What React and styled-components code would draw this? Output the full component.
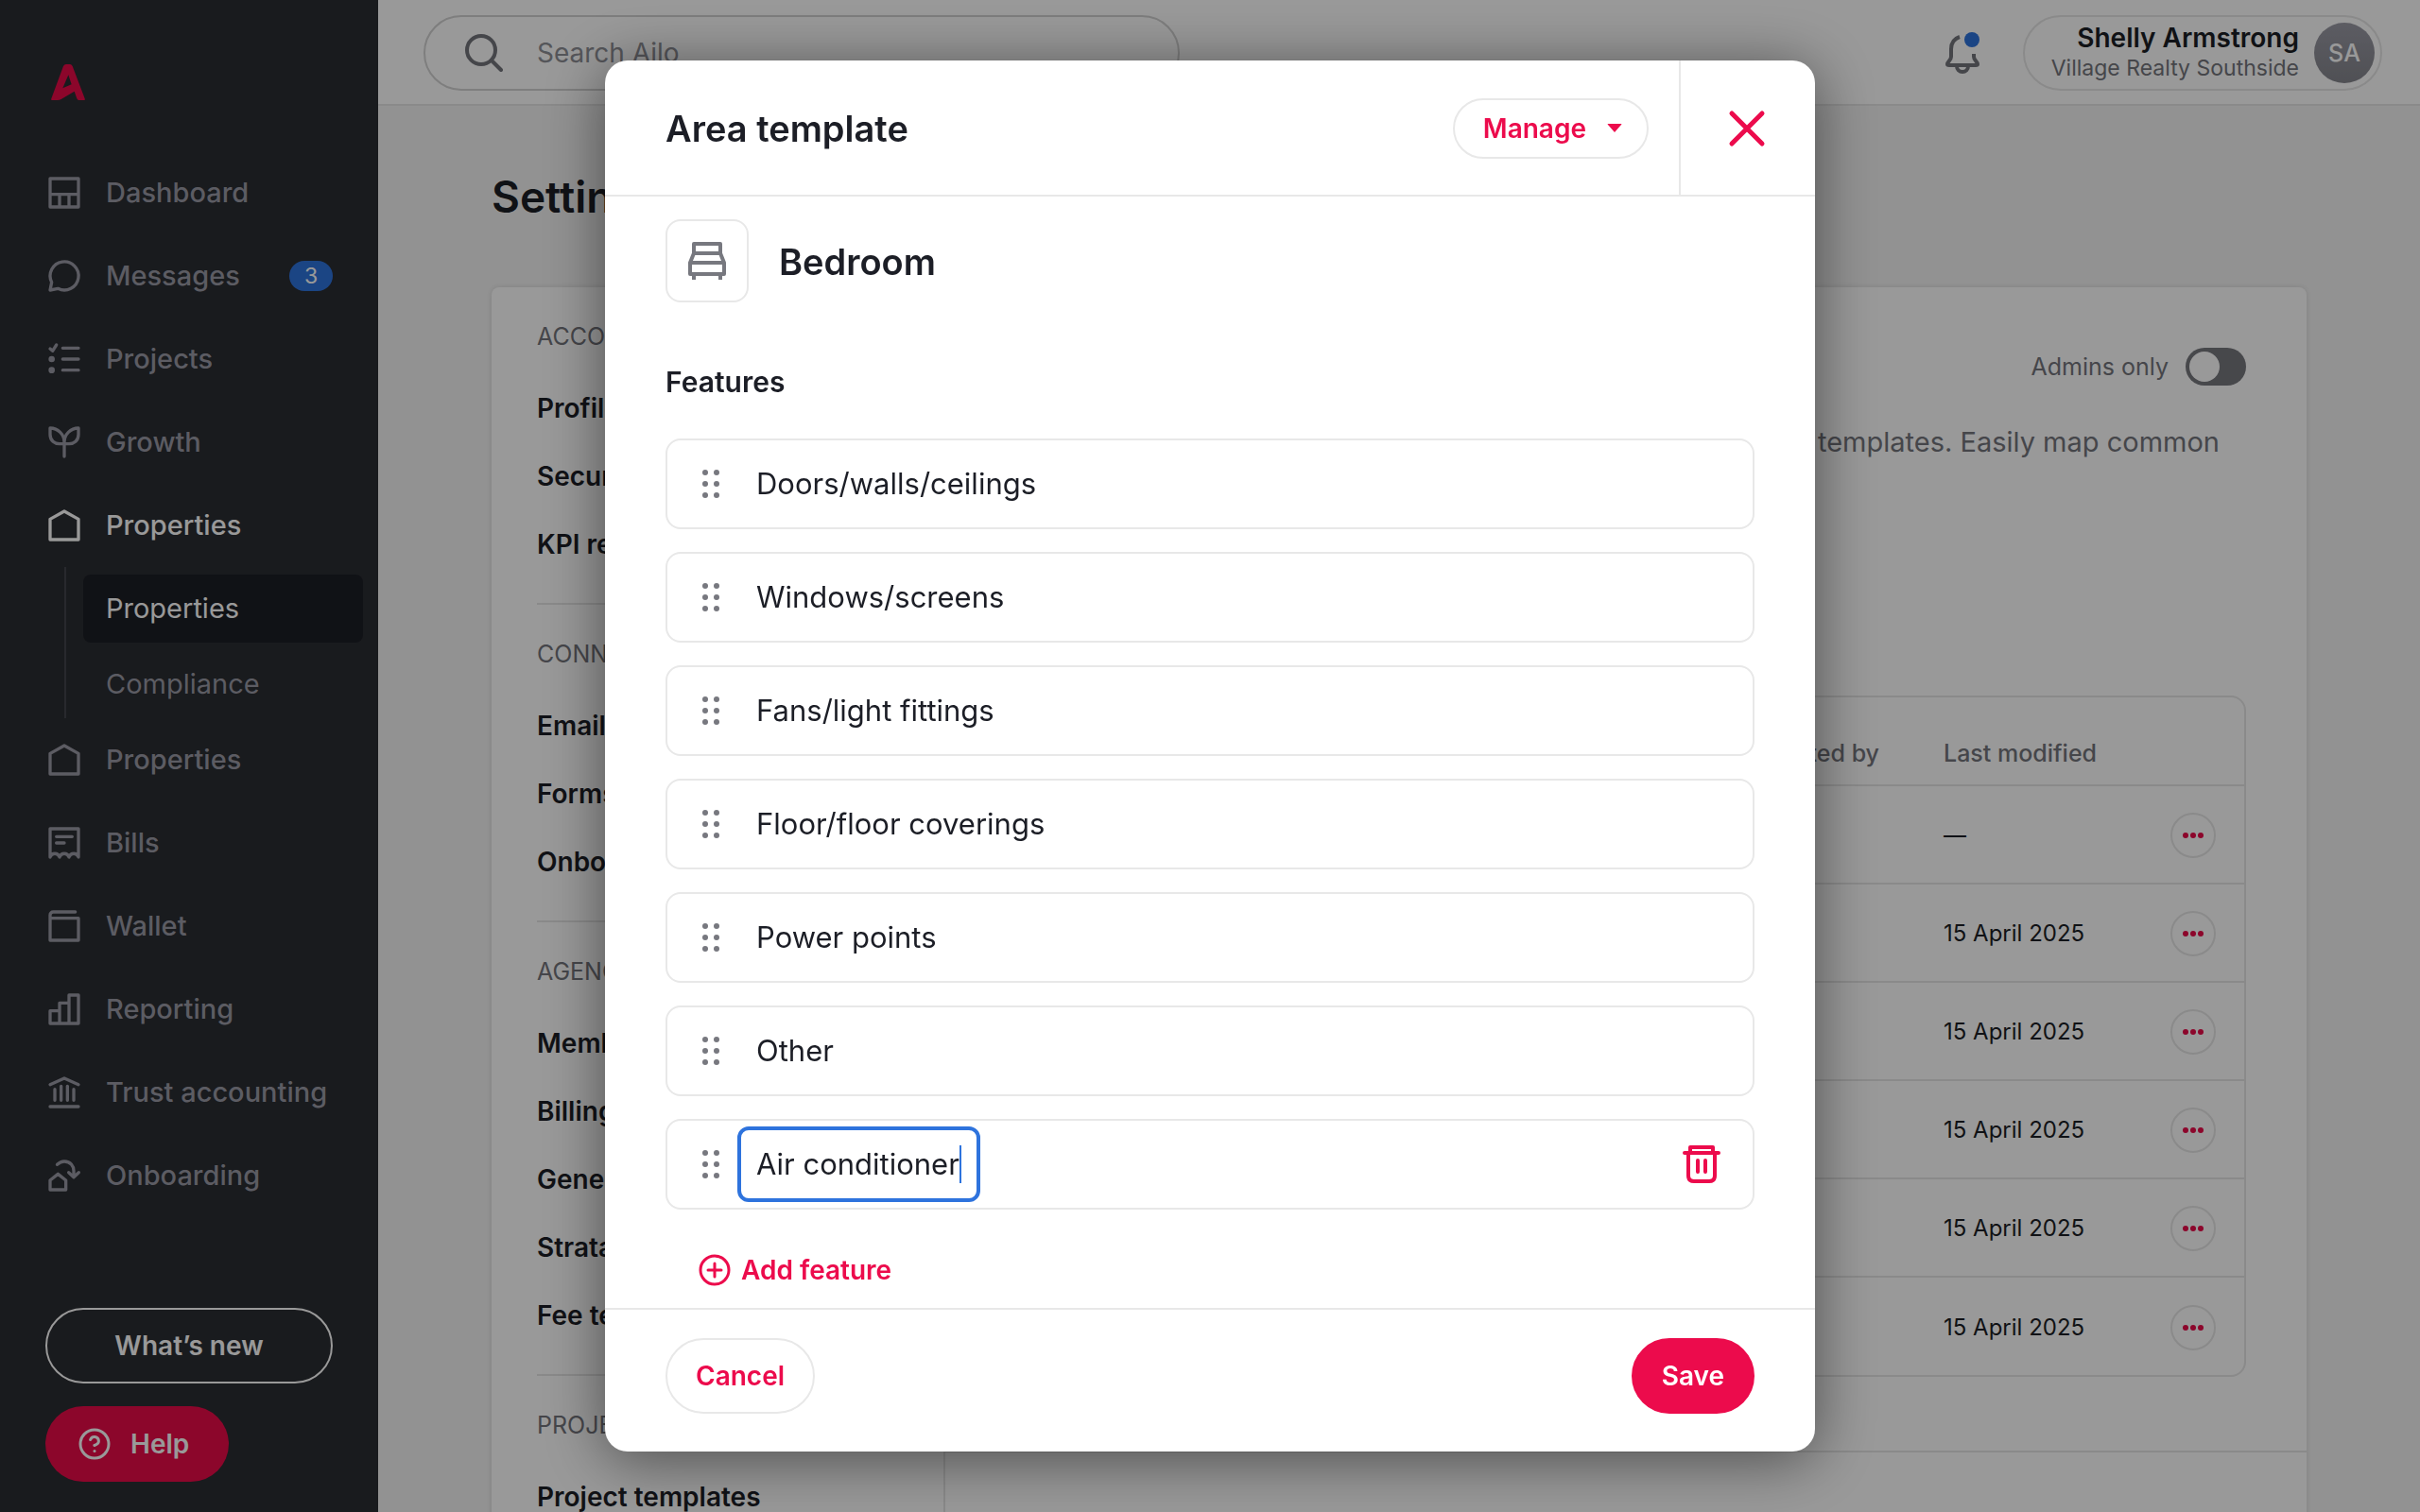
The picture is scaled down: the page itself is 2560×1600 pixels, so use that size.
import { useState } from 'react';
import styled, { createGlobalStyle } from 'styled-components';
import { CircleHelp } from 'lucide-react';

const GlobalStyle = createGlobalStyle`
  * {
    box-sizing: border-box;
  }

  body {
    margin: 0;
    background: #f4f4f4;
    color: #1c1e26;
    font-family: Inter, 'Liberation Sans', sans-serif;
    font-size: 29px;
    line-height: 40px;
  }

  button, input {
    font: inherit;
    color: inherit;
  }

  button {
    background: none;
    border: none;
    padding: 0;
    cursor: pointer;
  }

  a {
    color: inherit;
    text-decoration: none;
  }

  svg {
    display: block;
    flex-shrink: 0;
  }
`;

/* ---------- App shell ---------- */

const Page = styled.div`
  display: flex;
  height: 100vh;
  overflow: hidden;
`;

const Main = styled.div`
  flex: 1;
  min-width: 0;
`;

const Sidebar = styled.aside`
  width: 400px;
  flex-shrink: 0;
  display: flex;
  flex-direction: column;
  padding: 68px 0 32px;
  background: #2b2d32;
  color: #999aa5;
  font-weight: 500;
`;

const Logo = styled.a`
  margin: 0 54px 54px;
  color: #e90a49;
`;

const NavLink = styled.a`
  display: flex;
  align-items: center;
  height: 88px;
  padding: 0 48px;
  gap: 24px;
  color: ${({ $active }) => ($active ? '#fff' : 'inherit')};
`;

const NavBadge = styled.span`
  margin-left: auto;
  width: 46px;
  border-radius: 16px;
  background: #2e73dd;
  color: #fff;
  font-size: 23px;
  font-weight: 400;
  line-height: 32px;
  text-align: center;
`;

const SubNav = styled.div`
  display: flex;
  flex-direction: column;
  gap: 8px;
  margin-left: 68px;
  padding: 8px 16px 0 18px;
  border-left: 2px solid #43454d;
`;

const SubNavLink = styled.a`
  padding: 16px 24px;
  border-radius: 8px;
  background: ${({ $active }) => ($active ? '#1c1e26' : 'transparent')};
  color: ${({ $active }) => ($active ? '#fff' : 'inherit')};
  font-weight: 400;
`;

const SidebarActions = styled.div`
  display: flex;
  flex-direction: column;
  align-items: flex-start;
  gap: 24px;
  margin-top: auto;
  padding: 0 48px;
`;

const WhatsNewButton = styled.button`
  width: 100%;
  height: 80px;
  border: 2px solid #fff;
  border-radius: 40px;
  color: #fff;
  font-size: 28px;
  font-weight: 600;
`;

const HelpButton = styled.button`
  display: flex;
  align-items: center;
  gap: 20px;
  height: 80px;
  padding: 0 42px 0 34px;
  border-radius: 40px;
  background: #e90a49;
  color: #fff;
  font-size: 28px;
  font-weight: 600;
`;

/* ---------- Top bar ---------- */

const TopBar = styled.header`
  display: flex;
  align-items: center;
  height: 112px;
  padding: 2px 40px 0 48px;
  background: #fff;
  border-bottom: 2px solid #e6e6e6;
`;

const SearchBox = styled.label`
  display: flex;
  align-items: center;
  gap: 36px;
  width: 800px;
  height: 80px;
  padding: 0 42px;
  border: 2px solid #d2d2d2;
  border-radius: 40px;
  color: #74757c;
`;

const SearchInput = styled.input`
  flex: 1;
  border: none;
  outline: none;
  padding: 0;
  background: none;
  font-size: 28px;

  &::placeholder {
    color: #8e8f96;
    opacity: 1;
  }
`;

const BellButton = styled.button`
  margin-left: auto;
  margin-right: 40px;
`;

const UserButton = styled.button`
  display: flex;
  align-items: center;
  gap: 16px;
  height: 80px;
  padding: 0 6px 0 28px;
  border: 2px solid #e6e6e6;
  border-radius: 40px;
  text-align: right;
`;

const UserName = styled.span`
  display: block;
  font-size: 28px;
  font-weight: 600;
  line-height: 32px;
`;

const UserOrg = styled.span`
  display: block;
  color: #74757c;
  font-size: 23px;
  line-height: 32px;
`;

const Avatar = styled.span`
  width: 64px;
  border-radius: 50%;
  background: linear-gradient(#9a9aa5, #85868d);
  color: #fff;
  font-size: 25px;
  font-weight: 500;
  line-height: 64px;
  text-align: center;
`;

/* ---------- Settings ---------- */

const Content = styled.main`
  padding: 64px 120px 0;
`;

const PageTitle = styled.h1`
  margin: 0 0 64px;
  font-size: 46px;
  font-weight: 600;
  line-height: 64px;
`;

const Card = styled.div`
  display: flex;
  background: #fff;
  border-radius: 8px;
  box-shadow: 0 0 6px rgba(0, 0, 0, 0.12);
`;

const SettingsMenu = styled.nav`
  width: 480px;
  flex-shrink: 0;
  padding: 0 46px 0 48px;
  border-right: 2px solid #e6e6e6;
`;

const MenuGroup = styled.section`
  padding-bottom: 26px;
  border-bottom: 2px solid #e6e6e6;
`;

const MenuHeading = styled.h2`
  margin: 0;
  padding: 32px 0 20px;
  color: #74757c;
  font-size: 25px;
  font-weight: 400;
  text-transform: uppercase;
`;

const MenuLink = styled.a`
  display: block;
  padding: 16px 0;
  font-size: 28px;
  font-weight: 600;
  white-space: nowrap;
`;

const TemplatesPanel = styled.section`
  flex: 1;
  align-self: flex-start;
  padding: 64px 64px 78px;
  border-bottom: 2px solid #e6e6e6;
`;

const AdminToggle = styled.label`
  display: flex;
  align-items: center;
  justify-content: flex-end;
  gap: 18px;
  color: #74757c;
  font-size: 25px;
`;

const Switch = styled.input`
  appearance: none;
  width: 64px;
  height: 40px;
  margin: 0;
  padding: 4px;
  border-radius: 20px;
  background: #77787e;

  &::before {
    content: '';
    display: block;
    width: 32px;
    height: 32px;
    border-radius: 50%;
    background: #fff;
  }

  &:checked::before {
    margin-left: auto;
  }
`;

const PanelText = styled.p`
  margin: 40px 0 248px;
  padding-right: 28px;
  color: #74757c;
  text-align: right;
`;

const TableFrame = styled.div`
  border: 2px solid #e6e6e6;
  border-radius: 16px;
`;

const Table = styled.table`
  width: 100%;
  border-collapse: collapse;
  font-size: 24px;
  text-align: left;

  th {
    height: 93px;
    padding: 26px 0 0;
    color: #74757c;
    font-size: 25px;
    font-weight: 500;
    line-height: 36px;
  }

  td {
    height: 104px;
    padding: 2px 0 0;
    border-top: 2px solid #e6e6e6;
  }

  th:first-child {
    padding-right: 68px;
    text-align: right;
  }

  th:nth-child(2) {
    width: 240px;
  }

  th:last-child {
    width: 78px;
  }
`;

const MoreButton = styled.button`
  display: flex;
  align-items: center;
  justify-content: center;
  width: 48px;
  height: 48px;
  border: 2px solid #e6e6e6;
  border-radius: 50%;
  color: #e90a49;
`;

/* ---------- Modal ---------- */

const Overlay = styled.div`
  position: fixed;
  inset: 0;
  display: flex;
  justify-content: center;
  padding: 64px;
  background: rgba(0, 0, 0, 0.4);
`;

const Modal = styled.div`
  display: flex;
  flex-direction: column;
  width: 100%;
  max-width: 1280px;
  border-radius: 24px;
  background: #fff;
  box-shadow: 0 8px 64px rgba(0, 0, 0, 0.5);
`;

const ModalHeader = styled.header`
  display: flex;
  align-items: center;
  height: 144px;
  padding-left: 64px;
  border-bottom: 2px solid #e8e8e8;
`;

const ModalTitle = styled.h2`
  flex: 1;
  margin: 0;
  padding-top: 2px;
  font-size: 38px;
  font-weight: 600;
  line-height: 48px;
`;

const Button = styled.button`
  display: flex;
  align-items: center;
  justify-content: center;
  height: 80px;
  padding: 0 30px;
  border: 2px solid ${({ $primary }) => ($primary ? '#ec0b4c' : '#e8e8e8')};
  border-radius: 40px;
  background: ${({ $primary }) => ($primary ? '#ec0b4c' : '#fff')};
  color: ${({ $primary }) => ($primary ? '#fff' : '#ec0b4c')};
  font-size: 28px;
  font-weight: 600;
`;

const ManageButton = styled(Button)`
  height: 64px;
  margin: 2px 32px 0 0;
  padding-right: 26px;
  gap: 22px;
`;

const CloseButton = styled.button`
  display: flex;
  align-items: center;
  justify-content: center;
  align-self: stretch;
  width: 144px;
  padding: 2px 2px 0 0;
  border-left: 2px solid #e8e8e8;
  color: #ec0b4c;
`;

const ModalBody = styled.div`
  flex: 1;
  min-height: 0;
  overflow: hidden;
  padding: 24px 64px 0;
`;

const AreaHeading = styled.div`
  display: flex;
  align-items: center;
  gap: 32px;
`;

const AreaIcon = styled.button`
  display: flex;
  align-items: center;
  justify-content: center;
  width: 88px;
  height: 88px;
  border: 2px solid #e8e8e8;
  border-radius: 16px;
  color: #77787f;
`;

const SectionTitle = styled.h3`
  margin: 64px 0 40px;
  font-size: 30px;
  font-weight: 600;
  line-height: 40px;
`;

const FeatureList = styled.ul`
  display: flex;
  flex-direction: column;
  gap: 24px;
  margin: 0;
  padding: 0;
  list-style: none;
`;

const Feature = styled.li`
  display: flex;
  align-items: center;
  gap: 16px;
  height: 96px;
  padding: 0 34px;
  border: 2px solid #e8e8e8;
  border-radius: 16px;
  font-size: 31px;
`;

const FeatureField = styled.label`
  display: flex;
  align-items: center;
  height: 80px;
  padding: 0 16px;
  border: 4px solid ${({ $editing }) => ($editing ? '#2e73dd' : 'transparent')};
  border-radius: 12px;
`;

const FeatureInput = styled.input`
  field-sizing: content;
  height: 40px;
  padding: 0;
  border: none;
  outline: none;
  background: none;
  caret-color: transparent;
`;

const Caret = styled.span`
  width: 2px;
  height: 40px;
  background: #2e73dd;
`;

const DeleteButton = styled.button`
  margin-left: auto;
  color: #ec0b4c;
`;

const AddButton = styled.button`
  display: flex;
  align-items: center;
  gap: 8px;
  margin: 44px 32px 0;
  color: #ec0b4c;
  font-size: 28px;
  font-weight: 600;
`;

const ModalFooter = styled.footer`
  display: flex;
  justify-content: space-between;
  padding: 30px 64px 40px;
  border-top: 2px solid #e8e8e8;
`;

/* ---------- Icons ---------- */

function Icon({ children, size = 40, box = 24, width = 2 }) {
  return (
    <svg
      width={size}
      height={size}
      viewBox={`0 0 ${box} ${box}`}
      fill="none"
      stroke="currentColor"
      strokeWidth={width}
      strokeLinecap="round"
      strokeLinejoin="round"
      aria-hidden="true"
    >
      {children}
    </svg>
  );
}

const houseIcon = <path d="M12 3l9 5v13H3V8z" />;

const navIcons = {
  dashboard: <path d="M3 3h18v18H3zM3 13h18M9 13v8M15 13v8" />,
  messages: <path d="M3 21l1-5A9 9 0 1 1 8 20z" />,
  projects: (
    <>
      <path d="M3 5.4l1.6 1.4L7 3M11 5h10M11 12h10M11 19h10" />
      <circle cx="4" cy="12" r="1" />
      <circle cx="4" cy="19" r="1" />
    </>
  ),
  growth: <path d="M12 21v-9c0-5-4-9-9-9v4c0 4 3 6 6 6h6c3 0 6-2 6-6V3c-5 0-9 4-9 9" />,
  properties: houseIcon,
  bills: <path d="M3 21V3h18v18c-1-3-5-3-6 0-1-3-5-3-6 0-1-3-5-3-6 0M7 8h10M7 12h5" />,
  wallet: <path d="M19 3H5a2 2 0 0 0-2 2v16h18V7H4" />,
  reporting: <path d="M3 21v-8h6v8V8h6v13V3h6v18z" />,
  trust: <path d="M3 7l9-4 9 4M6 10v7M10 8v9M14 8v9M18 10v7M3 21h18" />,
  onboarding: <path d="M3 21v-6l5-4 5 4v6zM7.5 5C9 3.6 10.5 3 12 3c4 0 6 3 6 6v3.6M14.8 10l3.2 3 3.2-3" />,
};

function LogoMark() {
  return (
    <svg width="36" height="38" viewBox="0 0 108 114" fill="currentColor" fillRule="evenodd">
      <path d="M39 6Q42 0 48 0H60Q65 0 68 6L107 109Q109 114 104 114H88Q84 114 82 109L74 86L32 111Q27 114 21 114H3Q-1 114 1 109ZM55 34L37 76L65 64Z" />
    </svg>
  );
}

function BellIcon() {
  return (
    <svg width="48" height="48" viewBox="0 0 48 48" fill="none" stroke="#74757c" strokeWidth="4">
      <path d="M21 7C15 9 12 14 12 20v8c0 4-4 5-4 8q0 1 2 1h28q2 0 2-1c0-3-4-4-4-8v-3" />
      <path d="M18 38a6 6 0 0 0 12 0" />
      <circle cx="34" cy="10" r="8" fill="#2e73dd" stroke="none" />
    </svg>
  );
}

function DragDots() {
  return (
    <svg width="24" height="32" viewBox="0 0 24 32" fill="#77787f">
      {[4, 16, 28].map((y) => (
        <g key={y}>
          <circle cx="6" cy={y} r="3" />
          <circle cx="18" cy={y} r="3" />
        </g>
      ))}
    </svg>
  );
}

/* ---------- Data ---------- */

const navItems = [
  { key: 'dashboard', label: 'Dashboard' },
  { key: 'messages', label: 'Messages', badge: 3 },
  { key: 'projects', label: 'Projects' },
  { key: 'growth', label: 'Growth' },
  { key: 'properties', label: 'Properties', active: true, children: ['Properties', 'Compliance'] },
  { key: 'properties-2', icon: 'properties', label: 'Properties' },
  { key: 'bills', label: 'Bills' },
  { key: 'wallet', label: 'Wallet' },
  { key: 'reporting', label: 'Reporting' },
  { key: 'trust', label: 'Trust accounting' },
  { key: 'onboarding', label: 'Onboarding' },
];

const menuGroups = [
  { title: 'Account', items: ['Profile', 'Security', 'KPI reporting'] },
  { title: 'Connections', items: ['Email', 'Forms', 'Onboarding'] },
  { title: 'Agency', items: ['Members', 'Billing', 'General', 'Strata', 'Fee templates'] },
  { title: 'Projects', items: ['Project templates'] },
];

const modifiedDates = ['—', '15 April 2025', '15 April 2025', '15 April 2025', '15 April 2025', '15 April 2025'];

const features = [
  'Doors/walls/ceilings',
  'Windows/screens',
  'Fans/light fittings',
  'Floor/floor coverings',
  'Power points',
  'Other',
];

function AppSidebar() {
  return (
    <Sidebar>
      <Logo href="#" aria-label="Ailo">
        <LogoMark />
      </Logo>
      <nav>
        {navItems.map((item) => (
          <div key={item.key}>
            <NavLink href="#" $active={item.active}>
              <Icon>{navIcons[item.icon || item.key]}</Icon>
              {item.label}
              {item.badge && <NavBadge>{item.badge}</NavBadge>}
            </NavLink>
            {item.children && (
              <SubNav>
                {item.children.map((child, idx) => (
                  <SubNavLink key={child} href="#" $active={idx === 0}>
                    {child}
                  </SubNavLink>
                ))}
              </SubNav>
            )}
          </div>
        ))}
      </nav>
      <SidebarActions>
        <WhatsNewButton>What’s new</WhatsNewButton>
        <HelpButton>
          <CircleHelp size={36} />
          Help
        </HelpButton>
      </SidebarActions>
    </Sidebar>
  );
}

function AreaTemplateModal() {
  const [draft, setDraft] = useState('Air conditioner');

  return (
    <Overlay>
      <Modal role="dialog" aria-modal="true" aria-labelledby="modal-title">
        <ModalHeader>
          <ModalTitle id="modal-title">Area template</ModalTitle>
          <ManageButton>
            Manage
            <svg width="16" height="10" viewBox="0 0 16 10" fill="currentColor">
              <path d="M1 0h14q1 0 0 1L8 9 1 1q-1-1 0-1z" />
            </svg>
          </ManageButton>
          <CloseButton aria-label="Close">
            <Icon box={40} width={5}>
              <path d="M4 4l32 32M36 4L4 36" />
            </Icon>
          </CloseButton>
        </ModalHeader>
        <ModalBody>
          <AreaHeading>
            <AreaIcon aria-label="Change icon">
              <svg width="40" height="40" viewBox="0 0 40 40" fill="none" stroke="currentColor" strokeWidth="4" strokeLinejoin="round">
                <path d="M6 12V2h28v10zL2 22h36l-4-10M2 22v12h36V22M6 34v6M34 34v6" />
              </svg>
            </AreaIcon>
            <ModalTitle as="h3">Bedroom</ModalTitle>
          </AreaHeading>
          <SectionTitle>Features</SectionTitle>
          <FeatureList>
            {features.map((name) => (
              <Feature key={name}>
                <DragDots />
                <FeatureField as="span">{name}</FeatureField>
              </Feature>
            ))}
            <Feature>
              <DragDots />
              <FeatureField $editing>
                <FeatureInput
                  aria-label="Feature name"
                  value={draft}
                  onChange={(e) => setDraft(e.target.value)}
                />
                <Caret />
              </FeatureField>
              <DeleteButton aria-label="Delete feature">
                <Icon box={40} width={4}>
                  <path d="M2 8h36M8 8V2h24v6M6 8v24q0 6 6 6h16q6 0 6-6V8M16 16v12M24 16v12" />
                </Icon>
              </DeleteButton>
            </Feature>
          </FeatureList>
          <AddButton>
            <Icon box={40} width={3}>
              <circle cx="20" cy="20" r="15" />
              <path d="M13 20h14M20 13v14" />
            </Icon>
            Add feature
          </AddButton>
        </ModalBody>
        <ModalFooter>
          <Button>Cancel</Button>
          <Button $primary>Save</Button>
        </ModalFooter>
      </Modal>
    </Overlay>
  );
}

function App() {
  const [adminsOnly, setAdminsOnly] = useState(false);

  return (
    <>
      <GlobalStyle />
      <Page>
        <AppSidebar />
        <Main>
          <TopBar>
            <SearchBox>
              <Icon box={40} width={4}>
                <circle cx="17" cy="17" r="15" />
                <path d="M28 28l10 10" />
              </Icon>
              <SearchInput placeholder="Search Ailo" aria-label="Search Ailo" />
            </SearchBox>
            <BellButton aria-label="Notifications">
              <BellIcon />
            </BellButton>
            <UserButton>
              <span>
                <UserName>Shelly Armstrong</UserName>
                <UserOrg>Village Realty Southside</UserOrg>
              </span>
              <Avatar>SA</Avatar>
            </UserButton>
          </TopBar>
          <Content>
            <PageTitle>Settings</PageTitle>
            <Card>
              <SettingsMenu>
                {menuGroups.map((group) => (
                  <MenuGroup key={group.title}>
                    <MenuHeading>{group.title}</MenuHeading>
                    {group.items.map((item) => (
                      <MenuLink key={item} href="#">
                        {item}
                      </MenuLink>
                    ))}
                  </MenuGroup>
                ))}
              </SettingsMenu>
              <TemplatesPanel>
                <AdminToggle>
                  Admins only
                  <Switch
                    type="checkbox"
                    role="switch"
                    checked={adminsOnly}
                    onChange={(e) => setAdminsOnly(e.target.checked)}
                  />
                </AdminToggle>
                <PanelText>templates. Easily map common</PanelText>
                <TableFrame>
                  <Table>
                    <thead>
                      <tr>
                        <th>Created by</th>
                        <th>Last modified</th>
                        <th aria-label="Actions" />
                      </tr>
                    </thead>
                    <tbody>
                      {modifiedDates.map((date, idx) => (
                        <tr key={idx}>
                          <td />
                          <td>{date}</td>
                          <td>
                            <MoreButton aria-label="More actions">
                              <svg width="22" height="6" viewBox="0 0 22 6" fill="currentColor">
                                <circle cx="3" cy="3" r="3" />
                                <circle cx="11" cy="3" r="3" />
                                <circle cx="19" cy="3" r="3" />
                              </svg>
                            </MoreButton>
                          </td>
                        </tr>
                      ))}
                    </tbody>
                  </Table>
                </TableFrame>
              </TemplatesPanel>
            </Card>
          </Content>
        </Main>
      </Page>
      <AreaTemplateModal />
    </>
  );
}

export default App;
